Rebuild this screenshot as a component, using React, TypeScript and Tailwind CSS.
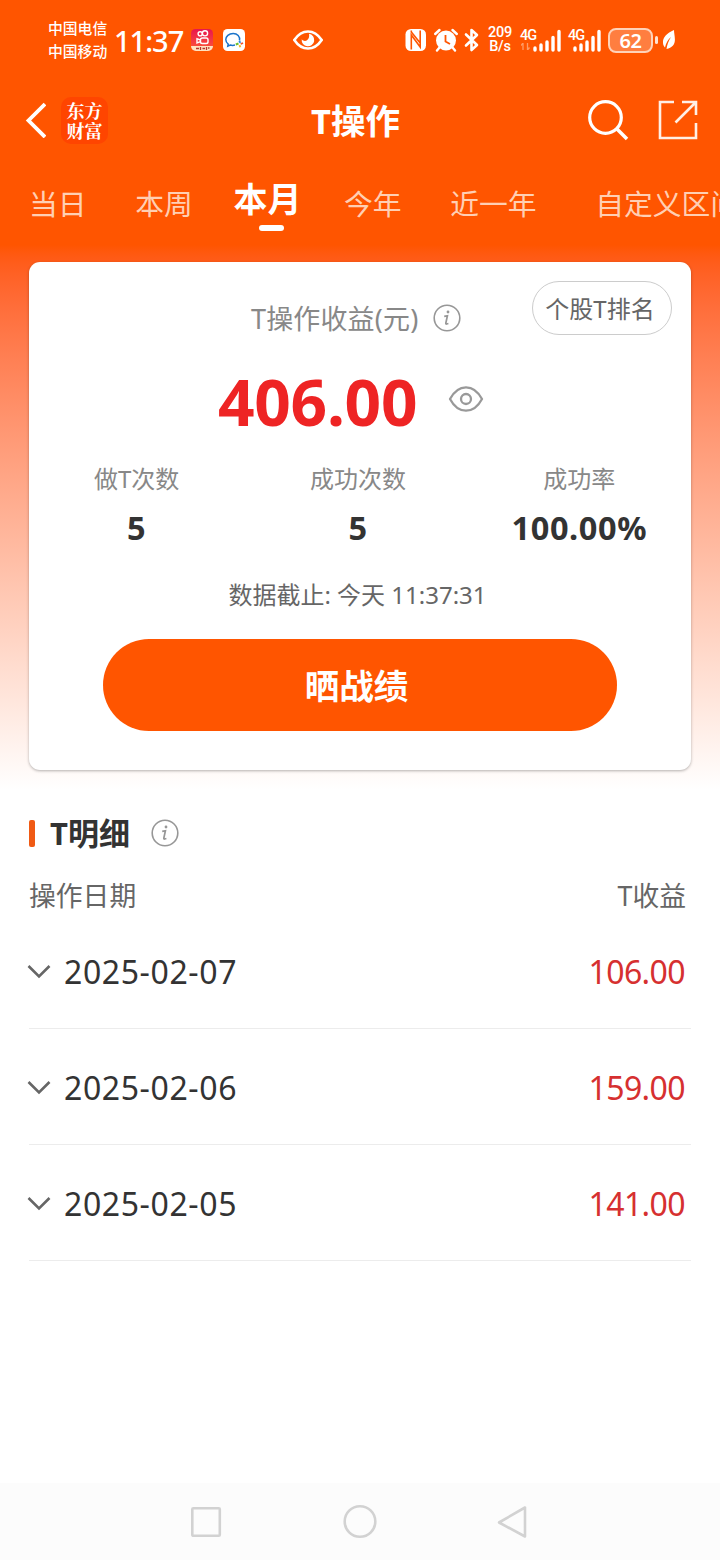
import { useState } from 'react'
import clsx from 'clsx'

interface Registro {
  data: string
  valor: string
}

const tabs = ['当日', '本周', '本月', '今年', '近一年', '自定义区间']

const stats = [
  { label: '做T次数', value: '5' },
  { label: '成功次数', value: '5' },
  { label: '成功率', value: '100.00%' },
]

const registros: Registro[] = [
  { data: '2025-02-07', valor: '106.00' },
  { data: '2025-02-06', valor: '159.00' },
  { data: '2025-02-05', valor: '141.00' },
]

function InfoIcon({ className }: { className?: string }) {
  return (
    <svg width="28" height="28" viewBox="0 0 28 28" fill="none" className={className}>
      <circle cx="14" cy="14" r="12.8" stroke="#979797" strokeWidth="1.6" />
      <circle cx="15" cy="8" r="1.4" fill="#979797" />
      <path d="M11.2 12.4l3.2-.6-1.6 7.4q-.1 1 .8.8l1.8-.5" stroke="#979797" strokeWidth="1.7" />
    </svg>
  )
}

function Signal() {
  return (
    <svg width="30" height="24" viewBox="0 0 30 24" stroke="#fff" strokeWidth="3.4" strokeLinecap="round">
      <path d="M4 22v-2M10 22v-5M16 22v-8M22 22V9.5M28 22V3.5" />
    </svg>
  )
}

function StatusBar() {
  return (
    <div className="flex h-20 items-center text-white">
      <div className="ml-12 w-[60px] text-[14.8px] leading-[23px] font-medium whitespace-nowrap">
        <div>中国电信</div>
        <div>中国移动</div>
      </div>
      <div className="ml-1.5 w-[77px] pt-px text-[29px] leading-8 font-medium tracking-[-1px]">11:37</div>
      {/* app de vídeo */}
      <svg width="22" height="22" viewBox="0 0 22 22" className="shrink-0">
        <defs>
          <linearGradient id="kw" x1="0" y1="0" x2="0" y2="1">
            <stop offset="0" stopColor="#e8154e" />
            <stop offset="1" stopColor="#ff5a36" />
          </linearGradient>
        </defs>
        <rect width="22" height="22" rx="4.5" fill="url(#kw)" />
        <path d="M0 17h22a5 5 0 0 1-5 5H5a5 5 0 0 1-5-5z" fill="#ffe3c0" />
        <g fill="none" stroke="#fff" strokeWidth="1.4">
          <circle cx="9.2" cy="4.8" r="2.1" />
          <circle cx="14" cy="4.3" r="2.6" />
          <rect x="9.5" y="9" width="7.5" height="5.5" rx="1.8" />
          <path d="M9.5 11L6 9.7v4.2l3.5-1.3" />
        </g>
        <path d="M5 19.5h3M9.5 18v3M11.5 19.5h2.5M15.5 18v3M17 19h1.5" stroke="#b8332c" strokeWidth="1.3" />
      </svg>
      {/* mensagens */}
      <svg width="22" height="22" viewBox="0 0 22 22" className="ml-[10px] shrink-0">
        <rect width="22" height="22" rx="4.5" fill="#fff" />
        <path d="M16.5 11.5c.8-4-2.2-7-6.3-7C5.8 4.500 2.8 7.300 2.8 10.600c0 2 1 3.500 2.400 4.600l-.4 2 2.400-1.200c1.600.5 3.200.5 4.800.1" fill="none" stroke="#1b74c9" strokeWidth="1.5" />
        <path d="M16.3 11.8l1 2" stroke="#2c8be6" strokeWidth="1.9" />
        <path d="M20 14l-2.300 1" stroke="#f0562f" strokeWidth="1.9" />
        <path d="M17.3 18.3l-.8-2.200" stroke="#f8b81c" strokeWidth="1.9" />
        <path d="M12.8 15.5l2.700-1" stroke="#6cc02e" strokeWidth="1.9" />
      </svg>
      <svg width="30" height="20" viewBox="0 0 30 20" className="ml-12 shrink-0">
        <path d="M1.3 10C5 4.5 9.5 1.5 15 1.5S25 4.5 28.7 10C25 15.5 20.5 18.5 15 18.5S5 15.5 1.3 10z" fill="none" stroke="#fff" strokeWidth="2.6" />
        <path d="M16 3.8a6.300 6.300 0 1 1-7.300 5.500c1.500 2 4 2 5.300 1 2-1.600 2.500-3.800 2-6.500z" fill="#fff" />
      </svg>

      {/* NFC */}
      <svg width="22" height="22" viewBox="0 0 22 22" className="ml-[82px] shrink-0">
        <rect x="0.5" width="20.5" height="22" rx="5.5" fill="#fff" />
        <path d="M6.3 20.5V6l8.900 12V1.500M6.300 1.500v1.500l8.900 11" fill="none" stroke="#ff5500" strokeWidth="1.6" />
      </svg>
      {/* despertador */}
      <svg width="24" height="24" viewBox="0 0 24 24" className="ml-[7px] shrink-0">
        <circle cx="12" cy="12.5" r="10" fill="#fff" />
        <path d="M1.2 6l4.300-4M22.800 6l-4.300-4M5.500 19.500L3 22.500M18.500 19.500l2.500 3" stroke="#fff" strokeWidth="2.4" strokeLinecap="round" />
        <path d="M11.5 7v6.500l4.500 2.500" fill="none" stroke="#ff5500" strokeWidth="1.8" />
      </svg>
      <svg width="16" height="24" viewBox="0 0 16 24" className="ml-[6px] shrink-0">
        <path d="M2 6.5l11 10.500-5.500 5V2l5.500 5L2 17.500" fill="none" stroke="#fff" strokeWidth="2.6" strokeLinejoin="round" strokeLinecap="round" />
      </svg>
      <div className="ml-[7px] w-[26px] text-center font-['Roboto',sans-serif] text-[14.5px] leading-[14px] font-medium tracking-[-0.2px]">
        <div>209</div>
        <div>B/s</div>
      </div>
      <div className="relative ml-[6px] h-6 w-[42px] shrink-0">
        <span className="absolute top-0 left-px font-['Roboto',sans-serif] text-[14.5px] leading-[15px] font-medium tracking-[-1px]">4G</span>
        <svg width="9" height="7" viewBox="0 0 9 7" className="absolute bottom-0.5 left-0.5">
          <path d="M2 7V0M0 2.5L2 0M6.5 0v7M8.5 4.5L6.5 7" fill="none" stroke="#ff9c66" strokeWidth="1.3" />
        </svg>
        <div className="absolute top-0 right-0"><Signal /></div>
      </div>
      <div className="relative ml-[6px] h-6 w-[34px] shrink-0">
        <span className="absolute top-0 left-px font-['Roboto',sans-serif] text-[14.5px] leading-[15px] font-medium tracking-[-1px]">4G</span>
        <div className="absolute top-0 right-0"><Signal /></div>
      </div>
      <div className="ml-[7px] flex h-[25px] w-[45px] shrink-0 items-center justify-center rounded-lg border-2 border-[#ffd2b8] bg-[#ff7e40] pt-px text-[20px] font-semibold tracking-[-0.5px]">62</div>
      <div className="ml-[2px] h-2 w-[3px] shrink-0 rounded bg-[#ffe3d2]" />
      <svg width="14" height="22" viewBox="0 0 14 22" className="ml-[4px] shrink-0">
        <path d="M12 1C5 4 .5 8.500 1 14c.2 2 .8 3.400 2 4.500C4 14 6 10.500 9 8c-2.500 4-4 8-4.500 12C10 19 13 15.500 12.900 10.500 12.900 7 12 4 12 1z" fill="#fff" />
      </svg>
    </div>
  )
}

function Header() {
  return (
    <div className="flex h-20 items-center px-6">
      <svg width="22" height="36" viewBox="0 0 22 36" fill="none">
        <path d="M21 2L4.5 18.5 21 35" stroke="#fff" strokeWidth="3.8" />
      </svg>
      <div className="ml-[15px] flex h-[47px] w-[47px] flex-col items-center justify-center rounded-[10px] bg-[#ff4500] font-['Noto_Serif_CJK_SC','Noto_Sans_CJK_SC',serif] text-[18px] leading-5 font-bold text-white">
        <span>东方</span>
        <span>财富</span>
      </div>
      <h1 className="ml-[203px] w-[91px] pt-px text-[34.5px] leading-[48px] font-bold whitespace-nowrap text-white">T操作</h1>
      <svg width="42" height="42" viewBox="0 0 42 42" fill="none" className="ml-auto" stroke="#fff">
        <circle cx="18.5" cy="18.5" r="15.8" strokeWidth="3.2" />
        <path d="M30 30l10 10" strokeWidth="3.6" />
      </svg>
      <svg width="40" height="40" viewBox="0 0 40 40" fill="none" className="mr-[-2px] ml-[29px]" stroke="#ffefe5">
        <path d="M16 2H2v36h36V23M24 2h14v13M38 2L17.5 22.5" strokeWidth="2.6" />
      </svg>
    </div>
  )
}

export default function App() {
  const [tabAtiva, setTabAtiva] = useState('本月')
  const [aberto, setAberto] = useState<string | null>(null)

  return (
    <div className="flex h-[1560px] w-[720px] flex-col overflow-hidden bg-white font-['Noto_Sans','Noto_Sans_CJK_SC',sans-serif]">
      <div className="h-[790px] shrink-0 bg-linear-to-b from-[#ff5500] from-[31%] to-white">
        <StatusBar />
        <Header />

        <div className="flex h-[102px] pl-[29px]">
          {tabs.map(tab => (
            <button
              key={tab}
              onClick={() => setTabAtiva(tab)}
              className={clsx(
                'flex h-[72px] shrink-0 flex-col items-center whitespace-nowrap last:ml-[10px]',
                tab === tabAtiva
                  ? '-ml-[8px] mr-[-6px] pt-[14px] text-[34px] leading-[50px] font-bold text-white'
                  : 'pt-[23px] text-[28.8px] leading-[42px] text-[#ffcfb3]'
              )}>
              <span className="mr-[48.6px]">{tab}</span>
              {tab === tabAtiva && <span className="mt-[1px] mr-[40px] h-1.5 w-[25px] shrink-0 rounded-full bg-white" />}
            </button>
          ))}
        </div>

        {/* Resumo */}
        <div className="mx-[29px] flex h-[508px] flex-col rounded-[11px] bg-white shadow-[0_1px_3px_rgba(0,0,0,0.3)]">
          <div className="flex h-[90px] pt-[19px] pr-[19px]">
            <span className="mt-[20px] ml-[222px] text-[27px] leading-9 tracking-[0.15px] whitespace-nowrap text-[#888]">T操作收益(元)</span>
            <InfoIcon className="mt-[23px] ml-[15px]" />
            <button className="ml-auto h-[54px] w-[140px] rounded-full border border-[#ccc] pt-0.5 pr-1 text-[24px] whitespace-nowrap text-[#666]">
              个股T排名
            </button>
          </div>
          <div className="flex h-[100px] items-center pl-[189px]">
            <span className="text-[64px] leading-[100px] font-bold tracking-[-0.3px] text-[#ee2424]">406.00</span>
            <svg width="36" height="28" viewBox="0 0 36 28" fill="none" stroke="#999" strokeWidth="2.3" className="mb-1.5 ml-[31px]">
              <path d="M2 14C6 6.5 11.5 2.3 18 2.3S30 6.5 34 14C30 21.5 24.5 25.7 18 25.7S6 21.5 2 14z" strokeLinejoin="round" />
              <circle cx="18" cy="14" r="5" />
            </svg>
          </div>
          <div className="-ml-[3px] grid h-[102px] grid-cols-3 pr-px text-center">
            {stats.map(s => (
              <div key={s.label}>
                <div className="mt-[9px] text-[24px] leading-9 text-[#888]">{s.label}</div>
                <div className="mt-[11px] text-[32.5px] leading-10 font-bold tracking-[0.6px] text-[#333]">{s.value}</div>
              </div>
            ))}
          </div>
          <div className="mt-[23px] pr-[5px] text-center text-[24px] leading-9 text-[#666]">数据截止: 今天 11:37:31</div>
          <button className="mx-auto mt-[26px] h-[92px] w-[514px] shrink-0 rounded-full bg-[#ff5500] pt-[2px] pr-[7px] text-[34.5px] font-bold text-white">
            晒战绩
          </button>
        </div>
      </div>

      {/* Detalhes */}
      <div className="flex-1 px-[29px]">
        <div className="flex h-[86px] items-center">
          <span className="h-[27px] w-1.5 rounded-xs bg-[#f05a14]" />
          <h2 className="ml-[15px] text-[31px] leading-10 font-bold text-[#333]">T明细</h2>
          <InfoIcon className="ml-[21px]" />
        </div>
        <div className="flex h-[37px] items-center justify-between pt-[3px] pr-[5px] text-[26.8px] text-[#666]">
          <span>操作日期</span>
          <span>T收益</span>
        </div>
        {registros.map(r => (
          <button
            key={r.data}
            onClick={() => setAberto(aberto === r.data ? null : r.data)}
            className="flex h-[116px] w-full items-center border-b border-[#ececec] pt-[2px] pr-1.5 text-[32px] text-[#333]">
            <svg width="24" height="15" viewBox="0 0 24 15" fill="none" className={clsx('-ml-0.5', aberto === r.data && 'rotate-180')}>
              <path d="M1.5 2L12 12.5 22.5 2" stroke="#666" strokeWidth="2.6" />
            </svg>
            <span className="ml-[13px] tracking-[0.6px]">{r.data}</span>
            <span className="ml-auto tracking-[-0.6px] text-[#d63030]">{r.valor}</span>
          </button>
        ))}
      </div>

      <div className="flex h-[77px] shrink-0 items-center bg-[#fcfcfc] pl-[191px]">
        <svg width="336" height="36" viewBox="0 0 336 36" fill="none" stroke="#d2d2d2" strokeWidth="2.6" strokeLinejoin="round">
          <rect x="1.3" y="4.3" width="27.5" height="27.5" rx="1" />
          <circle cx="169" cy="17.5" r="15.3" />
          <path d="M334 3.5v29L308 18.5z" />
        </svg>
      </div>
    </div>
  )
}
